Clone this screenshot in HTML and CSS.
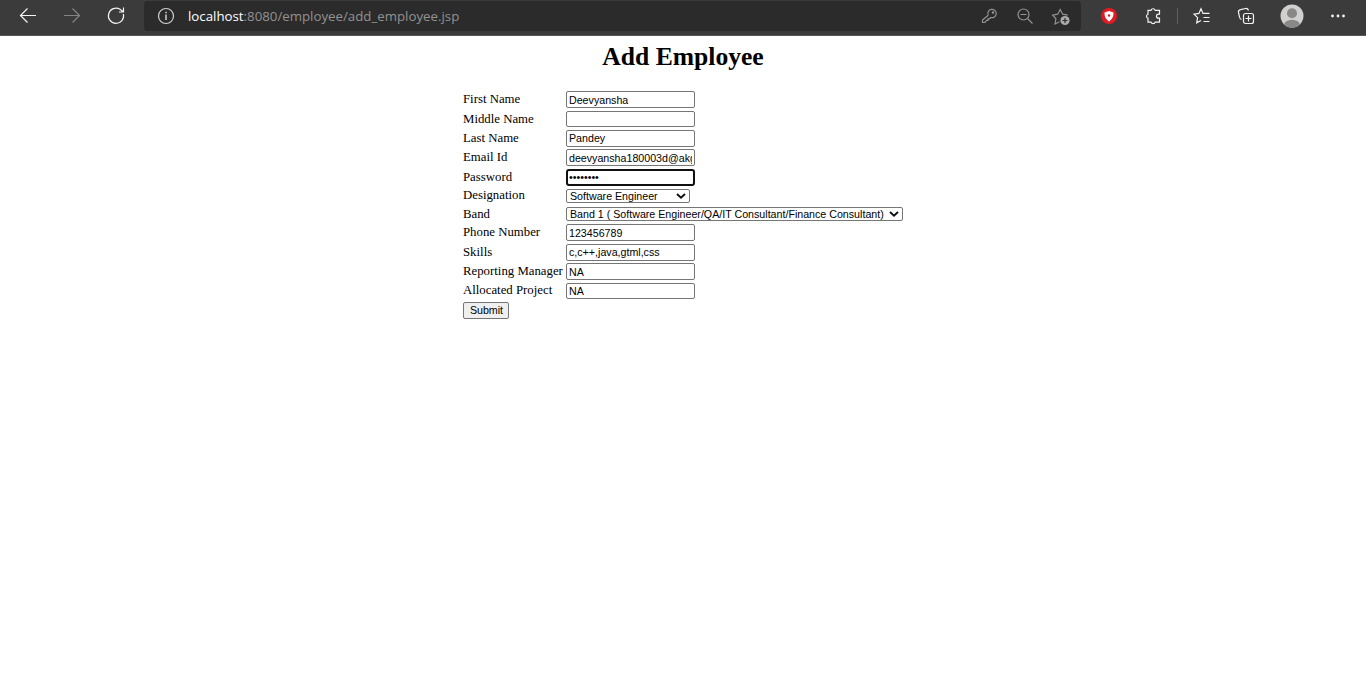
FILE: index.html
```html
<!DOCTYPE html>
<html lang="en">
<head>
<meta charset="utf-8">
<title>Add Employee</title>
<link rel="stylesheet" href="styles.css">
</head>
<body>
<header class="toolbar">
  <nav class="nav">
    <svg class="icon" viewBox="0 0 20 20"><path d="M18 9.5H2.5M9.5 2.5l-7 7 7 7"/></svg>
    <svg class="icon dim" viewBox="0 0 20 20"><path d="M2 9.500h15.500M10.500 2.500l7 7-7 7"/></svg>
    <svg class="icon" viewBox="0 0 20 20"><path d="M17.400 8A7.600 7.600 0 1 1 14 3.300L17.500 6M17.500 1.500V6H13"/></svg>
  </nav>
  <div class="address">
    <svg class="icon info" viewBox="0 0 20 20"><circle cx="10" cy="10" r="7.500"/><path class="stem" d="M10 8.500v5.500M10 5.800v1.500"/></svg>
    <span class="url"><span class="host">localhost</span>:8080/employee/add_employee.jsp</span>
    <svg class="icon soft" viewBox="0 0 20 20"><path d="M9.200 9.200A4.200 4.200 0 1 1 11.800 11.500L10.500 12.800H9V14.300H7.700L5.800 16.500H3.500v-2.500L9.200 9.200"/><circle cx="14" cy="6.500" r=".7"/></svg>
    <svg class="icon soft" viewBox="0 0 20 20"><circle cx="8.500" cy="8.500" r="5.500"/><path d="M5.500 8.500h6M12.500 12.500l5 5"/></svg>
    <svg class="icon soft" viewBox="0 0 20 20"><path d="M8.500 15.700l-4.500 2.300.9-5.200L1.700 9.100l5-.9L9.200 3.500l2.500 4.700 5 .9"/><circle class="badge" cx="14" cy="14.500" r="4.600"/><path class="plus" d="M14 12v5M11.500 14.500h5"/></svg>
  </div>
  <svg class="icon shield" viewBox="0 0 20 20"><circle class="red" cx="10" cy="10" r="8"/><path class="white" d="M5.500 6.500L10 5l4.500 1.500c0 4-1 6.500-4.500 9-3.500-2.500-4.500-5-4.500-9z"/><circle class="red" cx="10" cy="9.500" r="1.200"/></svg>
  <svg class="icon puzzle" viewBox="0 0 20 20"><path d="M5 4.300h3a2.200 2.200 0 0 1 4.200 0H16.500v3.900h-1a2 2 0 0 0 0 4h1v3.900h-4.300a2.200 2.200 0 0 1-4.200 0H5v-3.900a2.100 2.100 0 0 1 0-4z"/></svg>
  <span class="divider"></span>
  <svg class="icon favs" viewBox="0 0 20 20"><path d="M9 14.500l-4.300 2.300.9-5.100L2 8.100l4.900-.7L9 2.800l2 4.600h6.500M11.500 11.500h6M11.500 15.500h6"/></svg>
  <svg class="icon cards" viewBox="0 0 20 20"><rect x="7.500" y="7.500" width="10" height="10" rx="2"/><path d="M12.500 9.500v6M9.500 12.500h6M5.500 13.500C4.300 13.200 3.700 12 3.500 11L2.500 6.500C2.200 5 3 4 4.500 3.700L9.500 2.500c1.600-.3 2.500.4 3 2"/></svg>
  <svg class="avatar" viewBox="0 0 24 24"><defs><clipPath id="round"><circle cx="12" cy="12" r="11.500"/></clipPath></defs><circle cx="12" cy="12" r="11.500" fill="#d2d0ce"/><g clip-path="url(#round)" fill="#8a8886"><circle cx="12" cy="9.300" r="5"/><ellipse cx="12" cy="21" rx="8" ry="5.300"/></g></svg>
  <svg class="icon more" viewBox="0 0 20 20"><circle cx="4.500" cy="10" r="1.400"/><circle cx="10" cy="10" r="1.400"/><circle cx="15.500" cy="10" r="1.400"/></svg>
</header>
<main class="page">
  <h1 class="title">Add Employee</h1>
  <form class="form">
    <label class="label" for="first">First Name</label><input class="field" id="first" value="Deevyansha">
    <label class="label" for="middle">Middle Name</label><input class="field short" id="middle">
    <label class="label" for="last">Last Name</label><input class="field raised" id="last" value="Pandey">
    <label class="label" for="email">Email Id</label><input class="field" id="email" value="deevyansha180003d@akgec.ac.in">
    <label class="label" for="password">Password</label><input class="field active" id="password" type="password" value="password">
    <label class="label option" for="designation">Designation</label>
    <div class="picker designation"><select class="select" id="designation"><option>Software Engineer</option></select><svg class="arrow" viewBox="0 0 10 6"><path d="M1 1l4 3.700L9 1"/></svg></div>
    <label class="label option low" for="band">Band</label>
    <div class="picker band"><select class="select" id="band"><option>Band 1 ( Software Engineer/QA/IT Consultant/Finance Consultant)</option></select><svg class="arrow" viewBox="0 0 10 6"><path d="M1 1l4 3.700L9 1"/></svg></div>
    <label class="label" for="phone">Phone Number</label><input class="field" id="phone" value="123456789">
    <label class="label" for="skills">Skills</label><input class="field raised" id="skills" value="c,c++,java,gtml,css" spellcheck="false">
    <label class="label" for="manager">Reporting Manager</label><input class="field" id="manager" value="NA">
    <label class="label high" for="project">Allocated Project</label><input class="field short" id="project" value="NA">
    <button class="submit" type="button">Submit</button>
  </form>
</main>
</body>
</html>
```
FILE: styles.css
```css
* { box-sizing: border-box; }
body { margin: 0; background: #fff; color: #000; font-family: "Liberation Serif", "Times New Roman", serif; }
.toolbar { display: flex; align-items: center; height: 36px; padding-bottom: 4px; background: #3b3b3b; border-bottom: 1px solid #555; }
.nav { display: flex; gap: 24px; padding-left: 18px; width: 144px; }
.icon { width: 20px; height: 20px; flex: none; fill: none; stroke: #f3f3f3; stroke-width: 1.2; }
.dim { stroke: #858585; }
.soft { stroke: #929292; }
.address { display: flex; align-items: center; width: 937px; height: 30px; padding: 0 10px 0 12px; background: #2b2b2b; border-radius: 4px; gap: 16px; }
.info { stroke: #d0d0d0; }
.stem { stroke-width: 1.5; }
.url { flex: 1; margin-left: -4px; margin-right: -16px; font: 13.270px/20px "Open Sans", "Noto Sans", sans-serif; color: #929292; white-space: nowrap; }
.host { color: #fff; }
.badge { fill: #aaa; stroke: none; }
.plus { stroke: #2b2b2b; }
.shield { margin-left: 18px; stroke: none; }
.red { fill: #e01b24; }
.white { fill: #fff; }
.puzzle { margin-left: 24px; }
.divider { width: 1px; height: 16px; margin-left: 14px; background: #606060; }
.favs { margin-left: 14px; }
.cards { margin-left: 24px; }
.avatar { width: 24px; height: 24px; margin-left: 24px; }
.more { margin-left: 24px; fill: #f3f3f3; stroke: none; }
.page { padding-top: 6px; }
.title { margin: 0; font-size: 25.6px; line-height: 30px; text-align: center; }
.form { display: grid; grid-template-columns: 103px 337px; grid-template-rows: 20px 19px 19px 20px 20px 18px 17px 20px 19px 20px 19px 17px; align-items: start; width: 440px; margin: 19px 0 0 463px; }
.label { font-size: 12.8px; line-height: 17px; white-space: nowrap; }
.option { line-height: 13px; }
.low { line-height: 15px; }
.high { line-height: 15px; }
.field { width: 129px; height: 17px; margin: 0; padding: 1px 2px; border: 1px solid #767676; border-radius: 2px; background: #fff; color: #000; font: 10.667px "Liberation Sans", Arial, sans-serif; outline: none; }
.short { height: 16px; }
.raised { padding: 0 2px 2px; }
.active { padding: 0 1px 2px; border: 2px solid #101010; border-radius: 3px; }
.picker { display: flex; position: relative; height: 14px; }
.select { appearance: none; width: 100%; height: 14px; margin: 0; padding: 0 3px; border: 1px solid #767676; border-radius: 2px; background: #fff; color: #000; font: 10.667px/12px "Liberation Sans", Arial, sans-serif; }
.arrow { position: absolute; right: 4px; top: 4px; width: 10px; height: 6px; fill: none; stroke: #101010; stroke-width: 1.9; pointer-events: none; }
.designation { width: 124px; }
.band { width: 337px; }
.submit { width: 46px; height: 17px; padding: 0 0 2px 1px; border: 1px solid #767676; border-radius: 2px; background: #efefef; color: #000; font: 10.667px "Liberation Sans", Arial, sans-serif; }
```
